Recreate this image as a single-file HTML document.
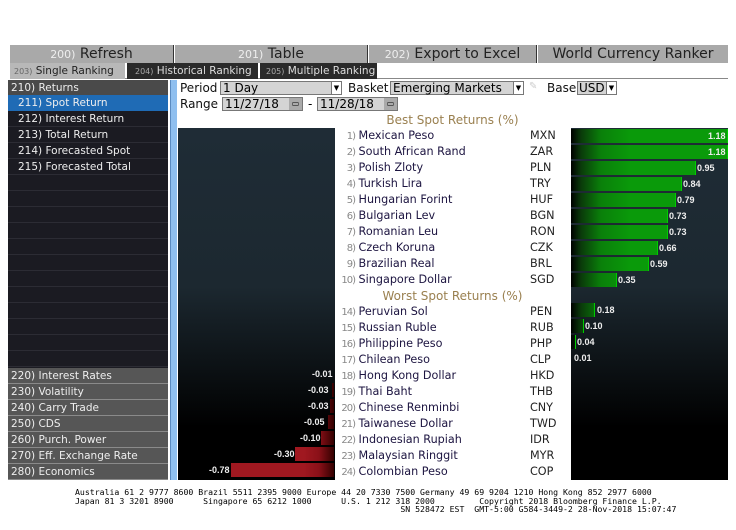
<!DOCTYPE html>
<html><head><meta charset="utf-8"><style>
*{margin:0;padding:0;box-sizing:border-box}
body{width:736px;height:530px;background:#fff;position:relative;overflow:hidden;font-family:"DejaVu Sans","Liberation Sans",sans-serif}
.a{position:absolute}
.tb{top:45px;height:18px;background:#a9a9a9;font-size:14px;color:#222;line-height:18px;text-align:center}
.tb b{font-weight:normal;color:#eee;font-size:11px}
.side div{position:absolute;left:8px;width:160px;height:16px;font-size:10.5px;line-height:16px;color:#eee;padding-left:6px}
.dk{background:#1b1b22;border-bottom:1px solid #2c2c34}
.gr{background:#565656;border-bottom:1px solid #8a8a8a}
.nm{left:340px;width:225px;font-size:11.2px;color:#1c1440;line-height:16px;height:16px}
.nm i{font-style:normal;color:#888;font-size:10px;display:inline-block;width:15px;text-align:right;letter-spacing:-1px}
.nm s{text-decoration:none;position:absolute;left:190px;color:#222}
.g{height:14px;background:linear-gradient(90deg,#000 0,#0a3a0a 10px,#0a800a 30px,#0a9a0a 60px);border-right:1px solid #0c0}
.r{height:14px;background:linear-gradient(270deg,#300 0,#8a1018 15px,#a01820 30px)}
.v{font-size:9px;color:#eee;line-height:14px;font-family:"Liberation Sans",sans-serif;font-weight:bold}
.ft{left:0;width:736px;font-family:"DejaVu Sans Mono","Liberation Mono",monospace;font-size:8.2px;line-height:8.5px;color:#000;white-space:pre}
</style></head><body>
<div class="a tb" style="left:10px;width:164px;border-right:1px solid #333"><b>200)</b> Refresh</div>
<div class="a tb" style="left:175px;width:193px;border-right:1px solid #333"><b>201)</b> Table</div>
<div class="a tb" style="left:369px;width:168px;border-right:1px solid #333"><b>202)</b> Export to Excel</div>
<div class="a tb" style="left:538px;width:190px">World Currency Ranker</div>
<div class="a" style="left:10px;top:63px;width:718px;height:16px;border-bottom:1px solid #888"></div>
<div class="a" style="left:10px;top:63px;width:115px;height:16px;background:#b8b8b8;font-size:10.5px;line-height:16px;color:#222;padding-left:4px"><span style="color:#666;font-size:8px">203)</span> Single Ranking</div>
<div class="a" style="left:127px;top:63px;width:131px;height:16px;background:#2a2a2a;font-size:10.5px;line-height:16px;color:#ddd;padding-left:8px"><span style="color:#aaa;font-size:8px">204)</span> Historical Ranking</div>
<div class="a" style="left:260px;top:63px;width:117px;height:16px;background:#2a2a2a;font-size:10.5px;line-height:16px;color:#ddd;padding-left:6px"><span style="color:#aaa;font-size:8px">205)</span> Multiple Ranking</div>
<div class="a" style="left:8px;top:80px;width:160px;height:400px;background:#1b1b22"></div>
<div class="side">
<div class="gr" style="top:80px;padding-left:3px;background:#4a4a4a">210) Returns</div>
<div style="top:95px;background:#1f6bb5;padding-left:10px">211) Spot Return</div>
<div class="dk" style="top:111px;padding-left:10px">212) Interest Return</div>
<div class="dk" style="top:127px;padding-left:10px">213) Total Return</div>
<div class="dk" style="top:143px;padding-left:10px">214) Forecasted Spot</div>
<div class="dk" style="top:159px;padding-left:10px">215) Forecasted Total</div>
<div class="dk" style="top:175px"></div><div class="dk" style="top:191px"></div><div class="dk" style="top:207px"></div><div class="dk" style="top:223px"></div><div class="dk" style="top:239px"></div><div class="dk" style="top:255px"></div><div class="dk" style="top:271px"></div><div class="dk" style="top:287px"></div><div class="dk" style="top:303px"></div><div class="dk" style="top:319px"></div><div class="dk" style="top:335px"></div><div class="dk" style="top:351px"></div>
<div class="gr" style="top:368px;padding-left:3px">220) Interest Rates</div>
<div class="gr" style="top:384px;padding-left:3px">230) Volatility</div>
<div class="gr" style="top:400px;padding-left:3px">240) Carry Trade</div>
<div class="gr" style="top:416px;padding-left:3px">250) CDS</div>
<div class="gr" style="top:432px;padding-left:3px">260) Purch. Power</div>
<div class="gr" style="top:448px;padding-left:3px">270) Eff. Exchange Rate</div>
<div class="gr" style="top:464px;padding-left:3px">280) Economics</div>
</div>
<div class="a" style="left:170px;top:80px;width:7px;height:400px;background:#8fbfef;border-left:1px solid #5a8ac0"></div>
<div class="a" style="left:180px;top:80px;font-size:12px;line-height:16px;color:#111">Period</div>
<div class="a" style="left:220px;top:81px;width:122px;height:14px;background:#d4d4d4;border:1px solid #777;font-size:12px;line-height:12px;padding-left:2px">1 Day<span style="position:absolute;right:0;top:0;width:10px;height:12px;background:#fff;border-left:1px solid #777;font-size:7px;text-align:center">▼</span></div>
<div class="a" style="left:348px;top:80px;font-size:12px;line-height:16px;color:#111">Basket</div>
<div class="a" style="left:390px;top:81px;width:134px;height:14px;background:#d4d4d4;border:1px solid #777;font-size:12px;line-height:12px;padding-left:2px">Emerging Markets<span style="position:absolute;right:0;top:0;width:10px;height:12px;background:#fff;border-left:1px solid #777;font-size:7px;text-align:center">▼</span></div>
<div class="a" style="left:529px;top:81px;font-size:10px;color:#ccc">✎</div>
<div class="a" style="left:547px;top:80px;font-size:12px;line-height:16px;color:#111">Base</div>
<div class="a" style="left:577px;top:81px;width:40px;height:14px;background:#d4d4d4;border:1px solid #777;font-size:12px;line-height:12px;padding-left:1px">USD<span style="position:absolute;right:0;top:0;width:10px;height:12px;background:#fff;border-left:1px solid #777;font-size:7px;text-align:center">▼</span></div>
<div class="a" style="left:180px;top:96px;font-size:12px;line-height:16px;color:#111">Range</div>
<div class="a" style="left:222px;top:97px;width:81px;height:14px;background:#d4d4d4;border:1px solid #777;font-size:12px;line-height:12px;padding-left:2px">11/27/18<span style="position:absolute;right:0;top:0;width:13px;height:12px;background:#aaa;font-size:8px;text-align:center">▭</span></div>
<div class="a" style="left:308px;top:96px;font-size:12px;line-height:16px">-</div>
<div class="a" style="left:317px;top:97px;width:81px;height:14px;background:#d4d4d4;border:1px solid #777;font-size:12px;line-height:12px;padding-left:2px">11/28/18<span style="position:absolute;right:0;top:0;width:13px;height:12px;background:#aaa;font-size:8px;text-align:center">▭</span></div>
<div class="a" style="left:178px;top:128px;width:157px;height:352px;background:linear-gradient(180deg,#1f2c36 0,#1c2830 45%,#0e1418 65%,#000 85%)"></div>
<div class="a" style="left:571px;top:128px;width:157px;height:352px;background:linear-gradient(180deg,#1f2c36 0,#1c2830 45%,#0e1418 65%,#000 85%)"></div>
<div class="a" style="left:340px;top:112px;width:225px;text-align:center;font-size:12px;color:#9a8050;line-height:16px">Best Spot Returns (%)</div>
<div class="a" style="left:340px;top:288px;width:225px;text-align:center;font-size:12px;color:#9a8050;line-height:16px">Worst Spot Returns (%)</div>
<div class="a nm" style="top:128px"><i>1)</i> Mexican Peso<s>MXN</s></div>
<div class="a nm" style="top:144px"><i>2)</i> South African Rand<s>ZAR</s></div>
<div class="a nm" style="top:160px"><i>3)</i> Polish Zloty<s>PLN</s></div>
<div class="a nm" style="top:176px"><i>4)</i> Turkish Lira<s>TRY</s></div>
<div class="a nm" style="top:192px"><i>5)</i> Hungarian Forint<s>HUF</s></div>
<div class="a nm" style="top:208px"><i>6)</i> Bulgarian Lev<s>BGN</s></div>
<div class="a nm" style="top:224px"><i>7)</i> Romanian Leu<s>RON</s></div>
<div class="a nm" style="top:240px"><i>8)</i> Czech Koruna<s>CZK</s></div>
<div class="a nm" style="top:256px"><i>9)</i> Brazilian Real<s>BRL</s></div>
<div class="a nm" style="top:272px"><i>10)</i> Singapore Dollar<s>SGD</s></div>
<div class="a nm" style="top:304px"><i>14)</i> Peruvian Sol<s>PEN</s></div>
<div class="a nm" style="top:320px"><i>15)</i> Russian Ruble<s>RUB</s></div>
<div class="a nm" style="top:336px"><i>16)</i> Philippine Peso<s>PHP</s></div>
<div class="a nm" style="top:352px"><i>17)</i> Chilean Peso<s>CLP</s></div>
<div class="a nm" style="top:368px"><i>18)</i> Hong Kong Dollar<s>HKD</s></div>
<div class="a nm" style="top:384px"><i>19)</i> Thai Baht<s>THB</s></div>
<div class="a nm" style="top:400px"><i>20)</i> Chinese Renminbi<s>CNY</s></div>
<div class="a nm" style="top:416px"><i>21)</i> Taiwanese Dollar<s>TWD</s></div>
<div class="a nm" style="top:432px"><i>22)</i> Indonesian Rupiah<s>IDR</s></div>
<div class="a nm" style="top:448px"><i>23)</i> Malaysian Ringgit<s>MYR</s></div>
<div class="a nm" style="top:464px"><i>24)</i> Colombian Peso<s>COP</s></div>
<div class="a g" style="left:571px;top:129px;width:157px"></div><div class="a v" style="left:708px;top:129px">1.18</div>
<div class="a g" style="left:571px;top:145px;width:157px"></div><div class="a v" style="left:708px;top:145px">1.18</div>
<div class="a g" style="left:571px;top:161px;width:125px"></div><div class="a v" style="left:697px;top:161px">0.95</div>
<div class="a g" style="left:571px;top:177px;width:111px"></div><div class="a v" style="left:683px;top:177px">0.84</div>
<div class="a g" style="left:571px;top:193px;width:105px"></div><div class="a v" style="left:677px;top:193px">0.79</div>
<div class="a g" style="left:571px;top:209px;width:97px"></div><div class="a v" style="left:669px;top:209px">0.73</div>
<div class="a g" style="left:571px;top:225px;width:97px"></div><div class="a v" style="left:669px;top:225px">0.73</div>
<div class="a g" style="left:571px;top:241px;width:87px"></div><div class="a v" style="left:659px;top:241px">0.66</div>
<div class="a g" style="left:571px;top:257px;width:78px"></div><div class="a v" style="left:650px;top:257px">0.59</div>
<div class="a g" style="left:571px;top:273px;width:46px"></div><div class="a v" style="left:618px;top:273px">0.35</div>
<div class="a g" style="left:571px;top:303px;width:24px"></div><div class="a v" style="left:597px;top:303px">0.18</div>
<div class="a g" style="left:571px;top:319px;width:13px"></div><div class="a v" style="left:585px;top:319px">0.10</div>
<div class="a g" style="left:571px;top:335px;width:5px"></div><div class="a v" style="left:577px;top:335px">0.04</div>
<div class="a v" style="left:574px;top:351px">0.01</div>
<div class="a v" style="left:312px;top:367px">-0.01</div>
<div class="a r" style="left:332px;top:383px;width:2px"></div><div class="a v" style="left:308px;top:383px">-0.03</div>
<div class="a r" style="left:330px;top:399px;width:4px"></div><div class="a v" style="left:308px;top:399px">-0.03</div>
<div class="a r" style="left:328px;top:415px;width:6px"></div><div class="a v" style="left:304px;top:415px">-0.05</div>
<div class="a r" style="left:321px;top:431px;width:13px"></div><div class="a v" style="left:300px;top:431px">-0.10</div>
<div class="a r" style="left:295px;top:447px;width:39px"></div><div class="a v" style="left:274px;top:447px">-0.30</div>
<div class="a r" style="left:231px;top:463px;width:103px"></div><div class="a v" style="left:209px;top:463px">-0.78</div>
<div class="a ft" style="top:488px;left:75px">Australia 61 2 9777 8600 Brazil 5511 2395 9000 Europe 44 20 7330 7500 Germany 49 69 9204 1210 Hong Kong 852 2977 6000
Japan 81 3 3201 8900      Singapore 65 6212 1000      U.S. 1 212 318 2000         Copyright 2018 Bloomberg Finance L.P.
                                                                  SN 528472 EST  GMT-5:00 G584-3449-2 28-Nov-2018 15:07:47</div>
</body></html>
